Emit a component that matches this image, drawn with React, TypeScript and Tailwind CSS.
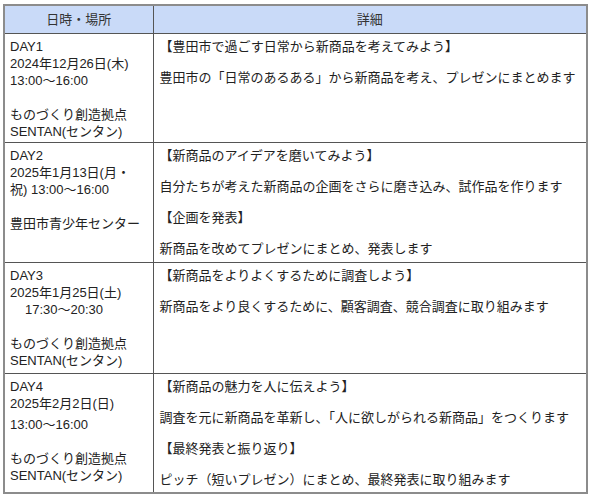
import React from 'react';

interface Row {
    left: React.ReactNode;
    right: string[];
    height: string;
}

const ROWS: Row[] = [
    {
        left: (
            <>
                DAY1<br />2024年12月26日(木)<br />13:00～16:00<br /><br />ものづくり創造拠点<br />SENTAN(センタン)
            </>
        ),
        right: [
            '【豊田市で過ごす日常から新商品を考えてみよう】',
            '豊田市の「日常のあるある」から新商品を考え、プレゼンにまとめます',
        ],
        height: 'h-[109px]',
    },
    {
        left: (
            <>
                DAY2<br />2025年1月13日(月・<br />祝) 13:00～16:00<br /><br />豊田市青少年センター
            </>
        ),
        right: [
            '【新商品のアイデアを磨いてみよう】',
            '自分たちが考えた新商品の企画をさらに磨き込み、試作品を作ります',
            '【企画を発表】',
            '新商品を改めてプレゼンにまとめ、発表します',
        ],
        height: 'h-[120px]',
    },
    {
        left: (
            <>
                DAY3<br />2025年1月25日(土)<br /><span className="pl-[15px]">17:30～20:30</span><br /><br />ものづくり創造拠点<br />SENTAN(センタン)
            </>
        ),
        right: [
            '【新商品をよりよくするために調査しよう】',
            '新商品をより良くするために、顧客調査、競合調査に取り組みます',
        ],
        height: 'h-[111px]',
    },
    {
        left: (
            <>
                DAY4<br />2025年2月2日(日)<br /><span className="inline-block pt-[4px]">13:00～16:00</span><br /><br />ものづくり創造拠点<br />SENTAN(センタン)
            </>
        ),
        right: [
            '【新商品の魅力を人に伝えよう】',
            '調査を元に新商品を革新し、「人に欲しがられる新商品」をつくります',
            '【最終発表と振り返り】',
            'ピッチ（短いプレゼン）にまとめ、最終発表に取り組みます',
        ],
        height: 'h-[120px]',
    },
];

export default function App() {
    return (
        <div
            className="w-[591px] h-[500px] bg-white pt-[4px] pl-[3px] text-[13px] leading-[17px] text-[#222]"
            style={{ fontFamily: '"Liberation Sans", "Noto Sans CJK JP", sans-serif' }}
        >
            <table className="table-fixed border-collapse w-[585px] border-2 border-[#8c8c8c]">
                <colgroup>
                    <col className="w-[149px]" />
                    <col />
                </colgroup>
                <thead>
                    <tr className="h-[28px] bg-[#c9daf8] text-[#333]">
                        <th className="font-normal text-center align-middle border-r border-b border-[#555]">日時・場所</th>
                        <th className="font-normal text-center align-middle border-b border-[#555]">詳細</th>
                    </tr>
                </thead>
                <tbody>
                    {ROWS.map((row, i) => (
                        <tr key={i} className={row.height}>
                            <td className="align-top pl-[5px] pt-[4px] border-r border-b border-[#555]">
                                {row.left}
                            </td>
                            <td className="align-top pl-[6px] pt-[4px] border-b border-[#555]">
                                {row.right.map((p, j) => (
                                    <p key={j} className="mb-[14px] last:mb-0">{p}</p>
                                ))}
                            </td>
                        </tr>
                    ))}
                </tbody>
            </table>
        </div>
    );
}
